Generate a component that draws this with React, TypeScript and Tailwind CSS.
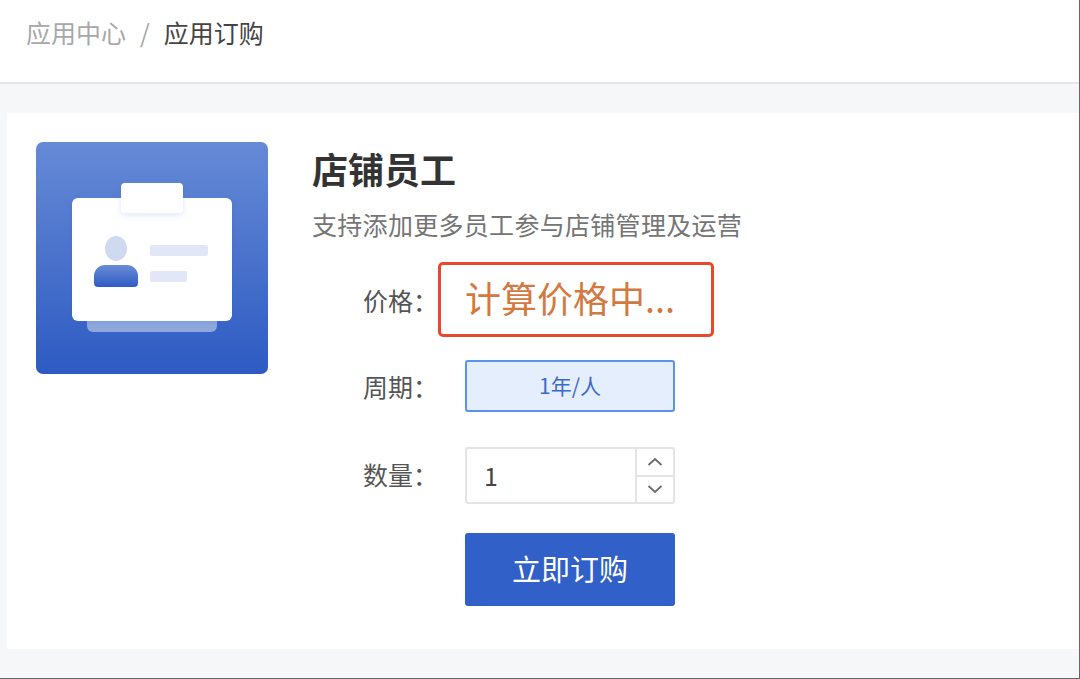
const cjk = 'font-["Noto_Sans_CJK_SC","Noto_Sans",sans-serif]';

function BadgeIcon() {
  return (
    <svg width="232" height="232" viewBox="0 0 232 232" className="block shrink-0">
      <defs>
        <linearGradient id="tile" x1="0" y1="0" x2="0" y2="1">
          <stop offset="0" stopColor="#668ad6" />
          <stop offset="1" stopColor="#2e5bc3" />
        </linearGradient>
        <linearGradient id="body" x1="0" y1="0" x2="0" y2="1">
          <stop offset="0" stopColor="#6a8dd6" />
          <stop offset="1" stopColor="#2f5cc5" />
        </linearGradient>
        <filter id="soft" x="-20%" y="-20%" width="140%" height="160%">
          <feDropShadow dx="0" dy="2" stdDeviation="3" floodColor="#2e5bc3" floodOpacity="0.15" />
        </filter>
      </defs>
      <rect width="232" height="232" rx="7" fill="url(#tile)" />
      <rect x="51" y="170" width="130" height="20" rx="6" fill="#8fa9dd" />
      <rect x="36" y="56" width="160" height="123" rx="6" fill="#fff" filter="url(#soft)" />
      <rect x="85" y="41" width="62" height="30" rx="4" fill="#fff" filter="url(#soft)" />
      <ellipse cx="80" cy="106.5" rx="11" ry="12.5" fill="#cfd9ef" />
      <path d="M58 134a11 11 0 0 1 11-11h22a11 11 0 0 1 11 11v7a4 4 0 0 1-4 4H62a4 4 0 0 1-4-4z" fill="url(#body)" />
      <rect x="114" y="103" width="58" height="11" rx="2" fill="#e1e7f6" />
      <rect x="114" y="129" width="37" height="11" rx="2" fill="#e1e7f6" />
    </svg>
  );
}

function Label({ text, width }: { text: string; width: string }) {
  return (
    <div className={`${width} shrink-0 text-[25px] leading-[36px] text-[#555555]`}>{text}</div>
  );
}

export default function App() {
  return (
    <div className={`${cjk} flex h-[679px] w-[1080px] flex-col overflow-hidden border-r border-b border-[#666666] bg-[#f6f7f9]`}>
      <header className="flex h-[84px] shrink-0 items-start gap-[14px] border-b-2 border-[#e6e6e6] bg-white pl-[26px] pt-[14px] text-[25px] leading-[36px]">
        <span className="text-[#a8a8a8]">应用中心</span>
        <span className="text-[#a8a8a8]">/</span>
        <span className="text-[#444444]">应用订购</span>
      </header>

      <main className="mb-[29px] ml-[7px] mt-[29px] flex flex-1 gap-[44px] bg-white pl-[29px] pt-[29px]">
        <BadgeIcon />
        <div className="flex flex-col">
          <h1 className="text-[36px] font-semibold leading-[52px] text-[#333333]">店铺员工</h1>
          <p className="mt-[12px] text-[25px] leading-[36px] tracking-[0.3px] text-[#757575]">支持添加更多员工参与店铺管理及运营</p>

          <div className="ml-[51px] mt-[20px] flex flex-col">
            <div className="flex h-[75px] items-center">
              <Label text="价格：" width="w-[75px]" />
              <div className="flex h-[75px] w-[276px] items-center rounded-[5px] border-[3px] border-[#e8492c] pb-[6px] pl-[24px] text-[36px] leading-none text-[#d2793f]">
                计算价格中...
              </div>
            </div>

            <div className="mt-[23px] flex h-[52px] items-center">
              <Label text="周期：" width="w-[102px]" />
              <div className="flex h-[52px] w-[210px] items-center justify-center rounded-[3px] border-2 border-[#5b92ec] bg-[#e5eefc] text-[21px] text-[#3c69c8]">
                1年/人
              </div>
            </div>

            <div className="mt-[35px] flex h-[57px] items-center pb-0">
              <div className="mb-[3px]">
                <Label text="数量：" width="w-[102px]" />
              </div>
              <div className="flex h-[57px] w-[210px] rounded-[3px] border-2 border-[#e3e3e3]">
                <div className="flex flex-1 items-center pl-[17px] text-[25px] text-[#444444]">1</div>
                <div className="flex w-[38px] flex-col border-l-2 border-[#e3e3e3] text-[#6b6b6b]">
                  <div className="flex flex-1 items-center justify-center border-b-2 border-[#e3e3e3]">
                    <svg width="16" height="10" viewBox="0 0 16 10" fill="none" stroke="currentColor" strokeWidth="1.8"><path d="M1.5 8L8 2l6.5 6" /></svg>
                  </div>
                  <div className="flex flex-1 items-center justify-center">
                    <svg width="16" height="10" viewBox="0 0 16 10" fill="none" stroke="currentColor" strokeWidth="1.8"><path d="M1.5 2L8 8l6.5-6" /></svg>
                  </div>
                </div>
              </div>
            </div>

            <button className="ml-[102px] mt-[29px] h-[73px] w-[210px] rounded-[3px] bg-[#3060c8] pb-[1px] text-[29px] text-white">
              立即订购
            </button>
          </div>
        </div>
      </main>
    </div>
  );
}
